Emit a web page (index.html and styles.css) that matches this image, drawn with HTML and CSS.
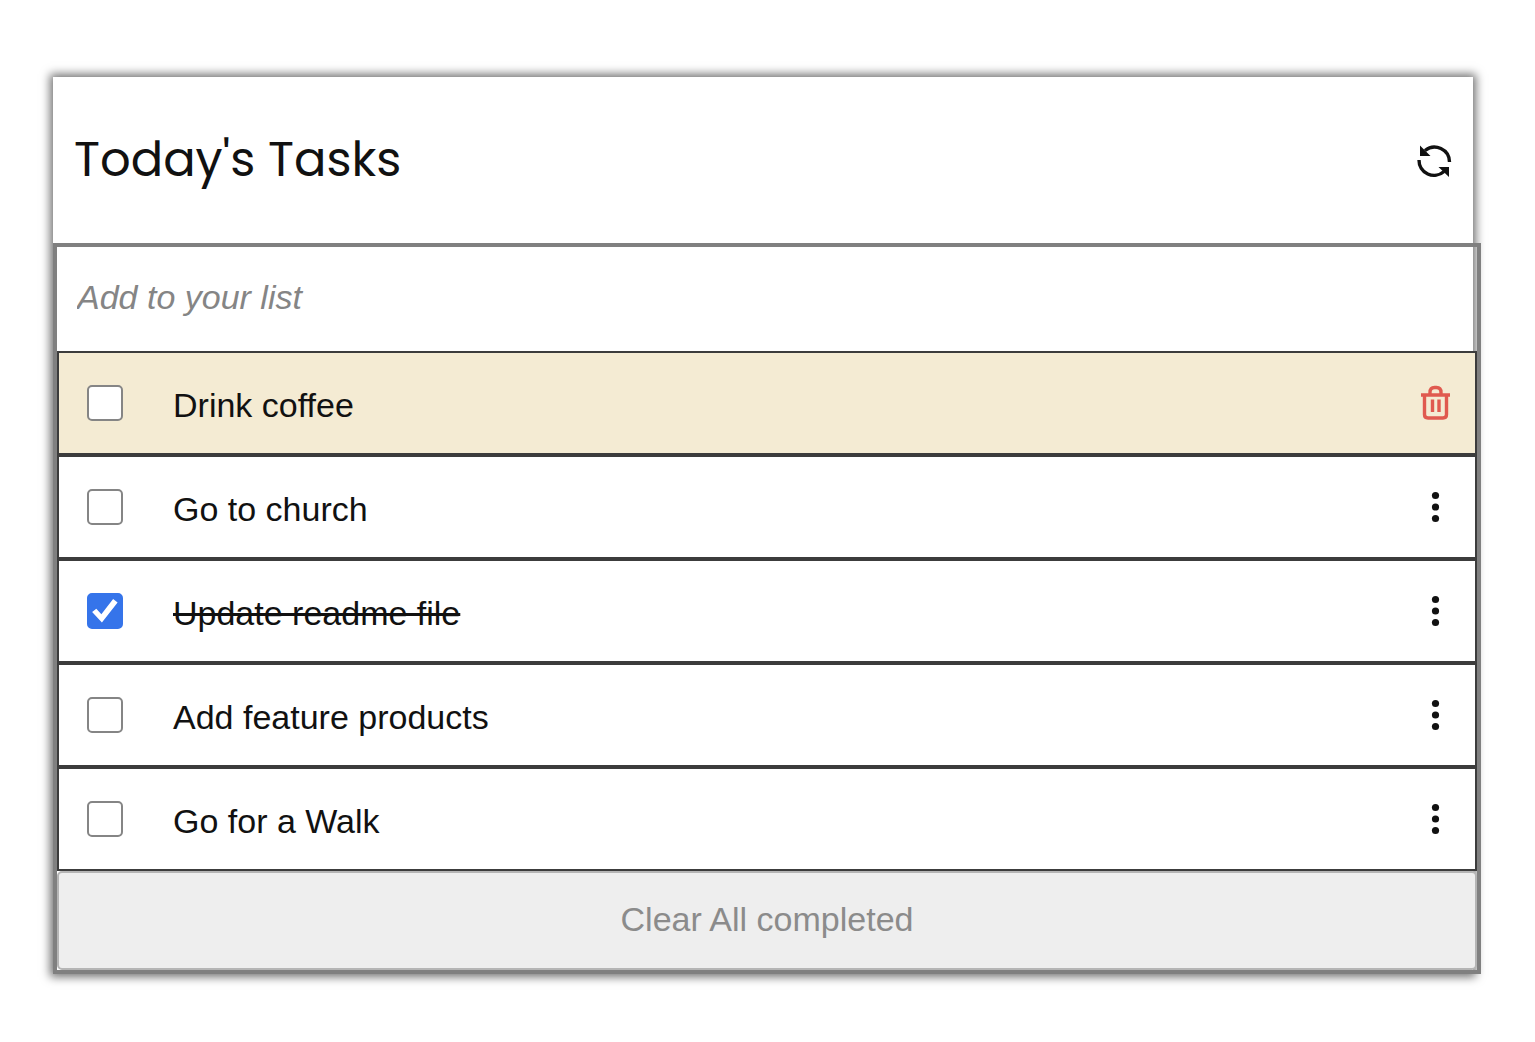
FILE: index.html
```html
<!DOCTYPE html>
<html lang="en">
<head>
<meta charset="utf-8">
<meta name="viewport" content="width=device-width, initial-scale=1">
<title>Today's Tasks</title>
<link rel="stylesheet" href="styles.css">
</head>
<body>
<main class="card">
  <header class="header">
    <h1 class="title">Today's Tasks</h1>
    <button class="icon-btn" type="button" aria-label="Refresh">
      <svg class="icon-refresh" viewBox="0 0 36 36" aria-hidden="true">
        <path d="M9 8.500A15 15 0 0 1 33.500 20M28 29.500A15 15 0 0 1 3 18" fill="none" stroke="currentColor" stroke-width="3.400"/>
        <path d="M4 3.500v10.500h10.500zM33 35V25H22.500z" fill="currentColor"/>
      </svg>
    </button>
  </header>
  <form class="tasks">
    <input class="new-task" type="text" placeholder="Add to your list" aria-label="Add to your list">
    <ul class="list">
      <li class="task task-selected">
        <input class="check" type="checkbox" id="task-1">
        <label class="label" for="task-1">Drink coffee</label>
        <button class="icon-btn" type="button" aria-label="Delete">
          <svg class="icon-trash" viewBox="0 0 36 36" fill="none" stroke="currentColor" stroke-width="3.400" aria-hidden="true">
            <path d="M4 10h29M7.500 11v18.500q0 3.500 3.500 3.500h15q3.500 0 3.500-3.500V11M13 9V7.500q0-5 4.500-5h2q4.500 0 4.500 5V9M15.500 14.500v12.500M22 14.500v12.500"/>
          </svg>
        </button>
      </li>
      <li class="task">
        <input class="check" type="checkbox" id="task-2">
        <label class="label" for="task-2">Go to church</label>
        <button class="icon-btn" type="button" aria-label="Options">
          <svg class="icon-dots" viewBox="0 0 36 36" fill="currentColor" aria-hidden="true"><circle cx="18.500" cy="6.500" r="3.600"/><circle cx="18.500" cy="18" r="3.600"/><circle cx="18.500" cy="29.500" r="3.600"/></svg>
        </button>
      </li>
      <li class="task">
        <input class="check" type="checkbox" id="task-3" checked>
        <label class="label" for="task-3">Update readme file</label>
        <button class="icon-btn" type="button" aria-label="Options">
          <svg class="icon-dots" viewBox="0 0 36 36" fill="currentColor" aria-hidden="true"><circle cx="18.500" cy="6.500" r="3.600"/><circle cx="18.500" cy="18" r="3.600"/><circle cx="18.500" cy="29.500" r="3.600"/></svg>
        </button>
      </li>
      <li class="task">
        <input class="check" type="checkbox" id="task-4">
        <label class="label" for="task-4">Add feature products</label>
        <button class="icon-btn" type="button" aria-label="Options">
          <svg class="icon-dots" viewBox="0 0 36 36" fill="currentColor" aria-hidden="true"><circle cx="18.500" cy="6.500" r="3.600"/><circle cx="18.500" cy="18" r="3.600"/><circle cx="18.500" cy="29.500" r="3.600"/></svg>
        </button>
      </li>
      <li class="task">
        <input class="check" type="checkbox" id="task-5">
        <label class="label" for="task-5">Go for a Walk</label>
        <button class="icon-btn" type="button" aria-label="Options">
          <svg class="icon-dots" viewBox="0 0 36 36" fill="currentColor" aria-hidden="true"><circle cx="18.500" cy="6.500" r="3.600"/><circle cx="18.500" cy="18" r="3.600"/><circle cx="18.500" cy="29.500" r="3.600"/></svg>
        </button>
      </li>
    </ul>
    <button class="clear" type="button">Clear All completed</button>
  </form>
</main>
</body>
</html>
```
FILE: styles.css
```css
body {
  margin: 0;
  padding: 77px 62px 68px 53px;
  background: #fff;
  color: #111;
  font-family: "Liberation Sans", Arial, sans-serif;
  font-size: 34px;
}

.card {
  background: #fff;
  box-shadow: 0 0 9px 3px #737373;
}

.header {
  display: flex;
  align-items: center;
  justify-content: space-between;
  height: 166px;
  padding: 0 21px;
}

.title {
  margin: 0;
  font-family: Poppins, Lato, sans-serif;
  font-size: 48px;
  font-weight: 400;
  line-height: 78px;
}

.icon-btn {
  display: flex;
  padding: 0;
  border: 0;
  background: none;
  color: #111;
}

.icon-btn svg {
  width: 36px;
  height: 36px;
}

/* The frame is wider than the card by its two side borders */
.tasks {
  box-sizing: content-box;
  width: 100%;
  border: 4px solid #808080;
}

.new-task {
  display: block;
  box-sizing: border-box;
  width: 100%;
  height: 104px;
  padding: 0 20px 4px;
  border: 0;
  background: none;
  font: italic 34px "Liberation Sans", Arial, sans-serif;
}

.new-task::placeholder {
  color: #858585;
}

.list {
  margin: 0;
  padding: 0;
  list-style: none;
}

.task {
  display: flex;
  align-items: center;
  box-sizing: border-box;
  height: 104px;
  padding: 0 22px 0 28px;
  border: 2px solid #3c3c3c;
  background: #fff;
}

.task-selected {
  background: #f4ebd3;
}

.task-selected .icon-btn {
  color: #e05a4f;
}

.check {
  flex: none;
  appearance: none;
  box-sizing: border-box;
  width: 36px;
  height: 36px;
  margin: 0;
  border: 2px solid #858585;
  border-radius: 5px;
  background: #fff;
}

.check:checked {
  display: grid;
  place-items: center;
  border-color: #3574ea;
  background: #3574ea;
}

.check:checked::before {
  content: "";
  width: 28px;
  height: 28px;
  background: #fff;
  clip-path: polygon(4% 54%, 19% 42%, 37% 62%, 79% 7%, 95% 20%, 39% 91%);
}

.label {
  flex: 1;
  padding: 4px 0 0 50px;
  line-height: 40px;
}

.check:checked + .label {
  text-decoration: line-through;
}

.clear {
  display: block;
  width: 100%;
  height: 99px;
  padding: 0 0 2px;
  border: 2px solid #b5b5b5;
  border-radius: 5px;
  background: #eee;
  color: #8b8b8b;
  font: 34px "Liberation Sans", Arial, sans-serif;
}
```
